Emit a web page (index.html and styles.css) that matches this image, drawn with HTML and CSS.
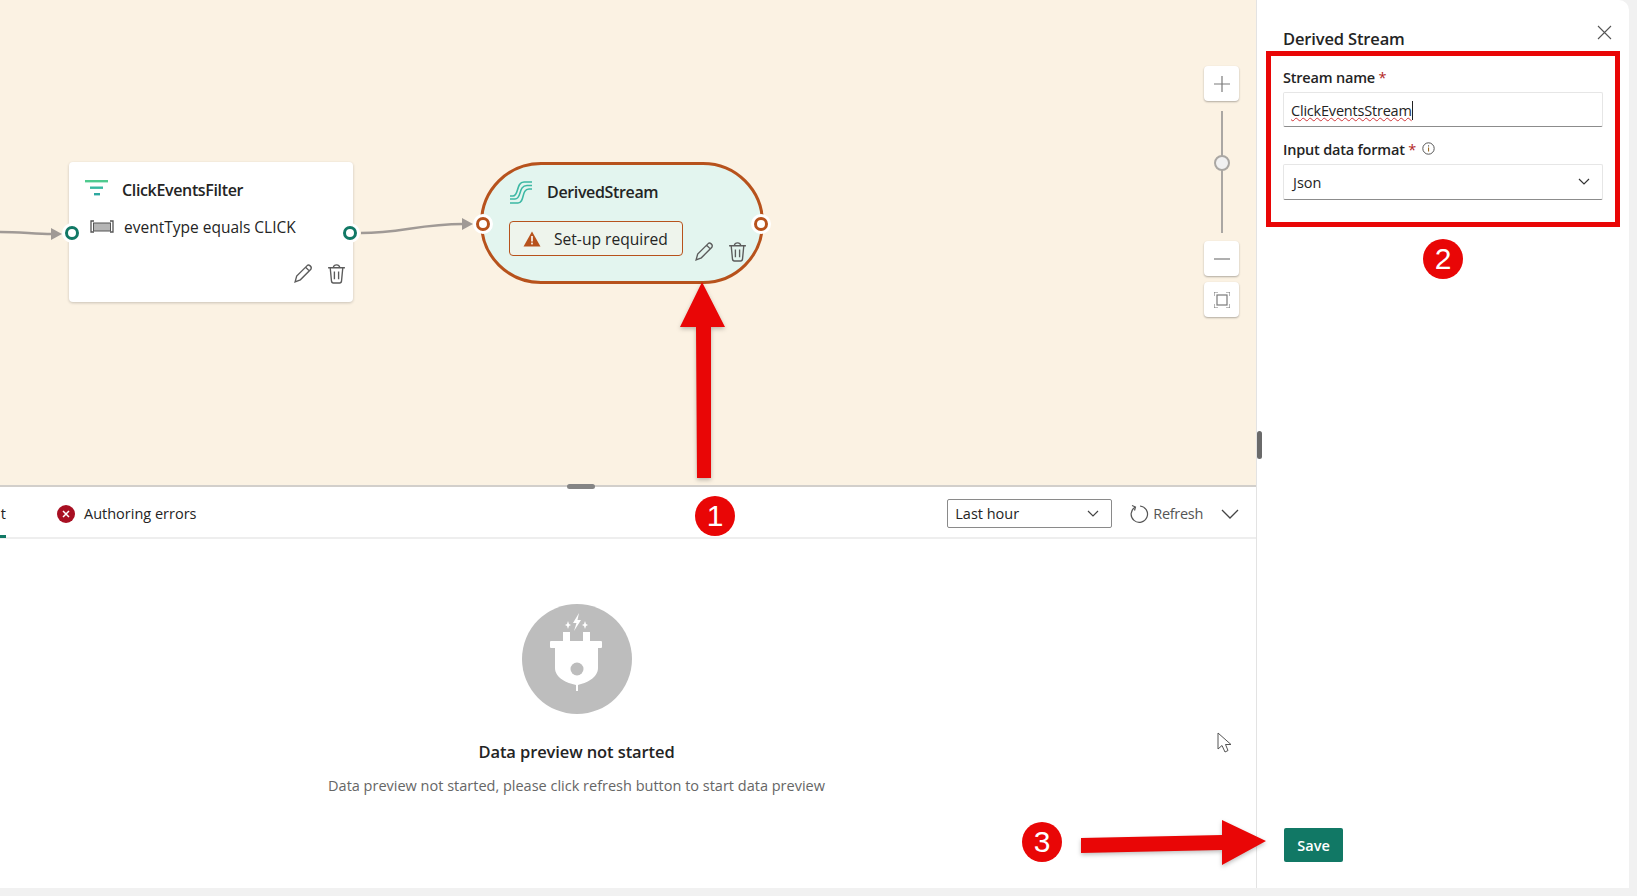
FILE: index.html
```html
<!DOCTYPE html>
<html lang="en">

<head>
    <meta charset="utf-8">
    <meta name="viewport" content="width=device-width, initial-scale=1.0">
    <title>Derived Stream</title>
    <link rel="stylesheet" href="styles.css">
</head>

<body>
    <div class="app">
        <main class="main">
            <section class="canvas">
                <svg class="edges" width="1256" height="485">
                    <path d="M0 232 C20 232 35 234 52 234" fill="none" stroke="#a09a96" stroke-width="2.5" />
                    <path d="M51 228 L62 234 L51 240 Z" fill="#a09a96" />
                    <path d="M361 233 C400 233 420 224 463 224" fill="none" stroke="#a09a96" stroke-width="2.5" />
                    <path d="M462 218 L473 224 L462 230 Z" fill="#a09a96" />
                </svg>

                <div class="node filter-node">
                    <div class="node-title">
                        <svg class="node-icon" width="24" height="20" viewBox="0 0 24 20">
                            <rect x="0" y="0" width="23" height="2.4" fill="#4fca8f" />
                            <rect x="5" y="6.5" width="13" height="2.4" fill="#38b8a0" />
                            <rect x="9" y="13" width="6" height="2.4" fill="#2ea8a0" />
                        </svg>
                        <span>ClickEventsFilter</span>
                    </div>
                    <div class="node-row">
                        <svg width="24" height="14" viewBox="0 0 24 14">
                            <path d="M4 1H1V12H4M20 1H23V12H20" fill="none" stroke="#555" stroke-width="1.3" />
                            <rect x="3.5" y="3" width="17" height="8" fill="#b5b5b5" stroke="#555" />
                        </svg>
                        <span>eventType equals CLICK</span>
                    </div>
                    <div class="node-actions">
                        <svg width="21" height="21" viewBox="0 0 20 20">
                            <path d="M2 18 L3.5 12.5 L13.5 2.5 C15 1 18.5 3.5 17 6 L7 16 Z M12 4 L15.5 7.5" fill="none" stroke="#5c5c5c" stroke-width="1.3" />
                        </svg>
                        <svg width="21" height="21" viewBox="0 0 20 20">
                            <path d="M2 4.5H18M7 4.5C7 .8 13 .8 13 4.5M4 4.5L5.2 17C5.3 18.2 6 19 7 19H13C14 19 14.7 18.2 14.8 17L16 4.5M8 8V15.5M12 8V15.5" fill="none" stroke="#5c5c5c" stroke-width="1.3" />
                        </svg>
                    </div>
                </div>

                <div class="node stream-node">
                    <div class="node-title">
                        <svg class="node-icon" width="24" height="24" viewBox="0 0 24 24">
                            <path d="M1 16H4C10 16 7 2 15 2H23" fill="none" stroke="#3cb8a4" stroke-width="1.6" />
                            <path d="M1 19H6C13 19 9 5.500 18 5.500H23" fill="none" stroke="#3cb8a4" stroke-width="1.6" />
                            <path d="M1 23H9C16 23 12 9 20 9H23" fill="none" stroke="#3cb8a4" stroke-width="1.6" />
                        </svg>
                        <span>DerivedStream</span>
                    </div>
                    <div class="stream-bottom">
                        <div class="badge">
                            <svg width="18" height="16" viewBox="0 0 18 16">
                                <path d="M9 .5 L17.5 15.5 H.5 Z" fill="#b7521c" />
                                <rect x="8.2" y="5" width="1.6" height="5.5" fill="#fff" />
                                <rect x="8.2" y="11.6" width="1.6" height="1.8" fill="#fff" />
                            </svg>
                            <span>Set-up required</span>
                        </div>
                        <div class="node-actions stream-actions">
                            <svg width="21" height="21" viewBox="0 0 20 20">
                                <path d="M2 18 L3.5 12.5 L13.5 2.5 C15 1 18.5 3.5 17 6 L7 16 Z M12 4 L15.5 7.5" fill="none" stroke="#5c5c5c" stroke-width="1.3" />
                            </svg>
                            <svg width="21" height="21" viewBox="0 0 20 20">
                                <path d="M2 4.5H18M7 4.5C7 .8 13 .8 13 4.5M4 4.5L5.2 17C5.3 18.2 6 19 7 19H13C14 19 14.7 18.2 14.8 17L16 4.5M8 8V15.5M12 8V15.5" fill="none" stroke="#5c5c5c" stroke-width="1.3" />
                            </svg>
                        </div>
                    </div>
                </div>

                <span class="port port-green port-a"></span>
                <span class="port port-green port-b"></span>
                <span class="port port-orange port-c"></span>
                <span class="port port-orange port-d"></span>

                <div class="zoom-tools">
                    <button class="zoom-btn">
                        <svg width="16" height="16" viewBox="0 0 16 16"><path d="M8 0V16M0 8H16" stroke="#7a7a7a" stroke-width="1.2" /></svg>
                    </button>
                    <div class="zoom-track"><span class="zoom-thumb"></span></div>
                    <button class="zoom-btn">
                        <svg width="16" height="16" viewBox="0 0 16 16"><path d="M0 8H16" stroke="#7a7a7a" stroke-width="1.2" /></svg>
                    </button>
                    <button class="zoom-btn">
                        <svg width="16" height="16" viewBox="0 0 16 16">
                            <path d="M0 4V0H4M12 0H16V4M16 12V16H12M4 16H0V12" fill="none" stroke="#7a7a7a" stroke-width="1.1" />
                            <rect x="3" y="3" width="10" height="10" fill="none" stroke="#7a7a7a" stroke-width="1.2" />
                        </svg>
                    </button>
                </div>
                <span class="sash"></span>
            </section>

            <section class="tabs">
                <div class="tab tab-active">t</div>
                <div class="tab tab-errors">
                    <svg width="18" height="18" viewBox="0 0 18 18">
                        <circle cx="9" cy="9" r="9" fill="#a80f22" />
                        <path d="M6 6L12 12M12 6L6 12" stroke="#fff" stroke-width="1.5" />
                    </svg>
                    <span>Authoring errors</span>
                </div>
                <div class="tabs-right">
                    <div class="range-select">
                        <span>Last hour</span>
                        <svg width="12" height="8" viewBox="0 0 12 8"><path d="M1 1L6 6L11 1" fill="none" stroke="#444" stroke-width="1.2" /></svg>
                    </div>
                    <div class="refresh">
                        <svg width="20" height="20" viewBox="0 0 20 20">
                            <path d="M6 3.2A8.2 8.2 0 1 0 11 2" fill="none" stroke="#555" stroke-width="1.2" />
                            <path d="M3 1.5L6.5 3L5.5 6.5" fill="none" stroke="#555" stroke-width="1.2" />
                        </svg>
                        <span>Refresh</span>
                    </div>
                    <svg class="collapse" width="18" height="10" viewBox="0 0 18 10"><path d="M1 1L9 9L17 1" fill="none" stroke="#444" stroke-width="1.3" /></svg>
                </div>
            </section>

            <section class="preview">
                <svg class="plug" width="110" height="110" viewBox="0 0 110 110">
                    <circle cx="55" cy="55" r="55" fill="#bdbdbd" />
                    <g fill="#fff">
                        <rect x="41" y="28" width="7" height="10" />
                        <rect x="61" y="28" width="7" height="10" />
                        <rect x="28" y="37" width="52" height="7" rx="1" />
                        <path d="M33 44H76V64C76 74 64 79 56 81V87H54V81C45 79 33 74 33 64Z" />
                        <path d="M57 9L51 19H54.5L52 27L59 16H55.5Z" />
                        <path d="M46 17L47 20L49 21L47 22L46 25L45 22L43 21L45 20Z" />
                        <path d="M63 17L64 20L66 21L64 22L63 25L62 22L60 21L62 20Z" />
                    </g>
                    <circle cx="55" cy="65" r="6.5" fill="#bdbdbd" />
                </svg>
                <h2 class="preview-title">Data preview not started</h2>
                <p class="preview-text">Data preview not started, please click refresh button to start data preview</p>
            </section>
        </main>

        <aside class="panel">
            <svg class="close" width="15" height="15" viewBox="0 0 15 15"><path d="M1 1L14 14M14 1L1 14" stroke="#555" stroke-width="1.1" /></svg>
            <h2 class="panel-title">Derived Stream</h2>
            <label class="field-label">Stream name <em>*</em></label>
            <div class="input"><span class="typed">ClickEventsStream</span></div>
            <label class="field-label second">Input data format <em>*</em>
                <svg class="info" width="13" height="13" viewBox="0 0 13 13">
                    <circle cx="6.5" cy="6.5" r="5.7" fill="none" stroke="#555" />
                    <rect x="6" y="5.5" width="1.1" height="4" fill="#9a6a20" />
                    <rect x="6" y="3.3" width="1.1" height="1.2" fill="#555" />
                </svg>
            </label>
            <div class="input dropdown">
                <span>Json</span>
                <svg width="12" height="8" viewBox="0 0 12 8"><path d="M1 1L6 6L11 1" fill="none" stroke="#333" stroke-width="1.2" /></svg>
            </div>
            <button class="save">Save</button>
        </aside>
    </div>

    <!-- annotations drawn over the screenshot -->
    <div class="mark-box"></div>
    <span class="step step-1">1</span>
    <span class="step step-2">2</span>
    <span class="step step-3">3</span>
    <svg class="marks" width="1637" height="896">
        <path d="M702 282 L725 327 H711 L711 478 H697 L696 327 H680 Z" fill="#e90606" />
        <path d="M1081 838 L1222 835 V820 L1266 841 L1222 865 V850 L1081 853 Z" fill="#e90606" />
    </svg>
    <svg class="cursor" width="16" height="22" viewBox="0 0 16 22">
        <path d="M1 1V17L5 13.5L8 20L11 18.5L8.5 12.5L14 12.5Z" fill="#fff" stroke="#555" stroke-width="1" />
    </svg>
</body>

</html>
```

FILE: styles.css
```css
body {
    margin: 0;
    background-color: #f1f1f1;
    font-family: "Open Sans", sans-serif;
    color: #242424;
    overflow: hidden;
}

.app {
    display: flex;
    width: 1629px;
    height: 888px;
}

.main {
    width: 1256px;
    display: flex;
    flex-direction: column;
    background-color: white;
}

/* canvas */

.canvas {
    position: relative;
    height: 485px;
    flex-shrink: 0;
    background-color: #fbf2e3;
    border-bottom: 2px solid #d2cfcb;
}

.edges {
    position: absolute;
    left: 0;
    top: 0;
}

.node {
    position: absolute;
    box-sizing: border-box;
}

.filter-node {
    left: 69px;
    top: 162px;
    width: 284px;
    height: 140px;
    padding: 18px 16px 0 16px;
    background-color: white;
    border-radius: 4px;
    box-shadow: 0 1px 3px rgba(0, 0, 0, 0.2);
}

.stream-node {
    left: 480px;
    top: 162px;
    width: 284px;
    height: 122px;
    padding: 15px 17px 0 26px;
    background-color: #e3f5ef;
    border: 3px solid #b7521c;
    border-radius: 61px;
}

.node-title {
    display: flex;
    align-items: center;
    gap: 13px;
    height: 20px;
    font-size: 16px;
    font-weight: 600;
    letter-spacing: -0.35px;
}

.stream-node .node-title {
    height: 24px;
    gap: 14px;
}

.node-row {
    display: flex;
    align-items: center;
    gap: 10px;
    margin-top: 17px;
    margin-left: 5px;
    height: 20px;
    font-size: 15.5px;
}

.node-actions {
    display: flex;
    justify-content: flex-end;
    gap: 12px;
    margin-top: 26px;
    margin-right: -10px;
}

.stream-bottom {
    display: flex;
    align-items: flex-end;
    margin-top: 17px;
}

.stream-actions {
    margin: 0 0 0 11px;
    position: relative;
    top: 6px;
}

.badge {
    display: flex;
    flex-shrink: 0;
    align-items: center;
    gap: 13px;
    box-sizing: border-box;
    width: 174px;
    height: 35px;
    padding-left: 13px;
    font-size: 15.6px;
    background-color: #eef4ec;
    border: 1px solid #b7521c;
    border-radius: 4px;
}

.port {
    position: absolute;
    box-sizing: border-box;
    width: 14px;
    height: 14px;
    background-color: white;
    border-radius: 50%;
    border: 3px solid;
    box-shadow: 0 0 0 3px white;
}

.port-green {
    border-color: #117865;
}

.port-orange {
    border-color: #b7521c;
}

.port-a {
    left: 65px;
    top: 226px;
}

.port-b {
    left: 343px;
    top: 226px;
}

.port-c {
    left: 476px;
    top: 217px;
}

.port-d {
    left: 754px;
    top: 217px;
}

.zoom-tools {
    position: absolute;
    left: 1204px;
    top: 66px;
    width: 35px;
    display: flex;
    flex-direction: column;
    align-items: center;
}

.zoom-btn {
    box-sizing: border-box;
    width: 35px;
    height: 35px;
    padding: 0;
    margin-bottom: 6px;
    display: flex;
    align-items: center;
    justify-content: center;
    background-color: white;
    border: none;
    border-radius: 4px;
    box-shadow: 0 1px 2px rgba(0, 0, 0, 0.3);
}

.zoom-track {
    position: relative;
    width: 2px;
    height: 122px;
    margin: 4px 0 8px 0;
    background-color: #aaa7a3;
}

.zoom-thumb {
    position: absolute;
    left: -7px;
    top: 44px;
    box-sizing: border-box;
    width: 16px;
    height: 16px;
    background-color: #f1f1f1;
    border: 2px solid #aaa7a3;
    border-radius: 50%;
}

.sash {
    position: absolute;
    left: 567px;
    bottom: -4px;
    width: 28px;
    height: 5px;
    background-color: #858585;
    border-radius: 3px;
}

/* tab bar */

.tabs {
    display: flex;
    align-items: center;
    box-sizing: border-box;
    height: 52px;
    padding-top: 3px;
    flex-shrink: 0;
    font-size: 14.5px;
    border-bottom: 2px solid #eeeeee;
}

.tab {
    display: flex;
    align-items: center;
    height: 100%;
}

.tab-active {
    position: relative;
    width: 6px;
    justify-content: flex-end;
}

.tab-active::after {
    content: "";
    position: absolute;
    left: 0;
    right: 0;
    bottom: -1px;
    height: 3px;
    background-color: #117865;
}

.tab-errors {
    margin-left: 51px;
    gap: 9px;
}

.tabs-right {
    display: flex;
    align-items: center;
    margin-left: auto;
    margin-right: 17px;
}

.range-select {
    display: flex;
    align-items: center;
    justify-content: space-between;
    box-sizing: border-box;
    width: 165px;
    height: 29px;
    padding: 0 12px 0 7px;
    margin-right: 17px;
    border: 1px solid #8a8a8a;
    border-radius: 2px;
}

.refresh {
    display: flex;
    align-items: center;
    gap: 4px;
    color: #555;
    letter-spacing: -0.3px;
    margin-right: 18px;
}

.preview {
    flex: 1;
    display: flex;
    flex-direction: column;
    align-items: center;
    width: 1153px;
    padding-top: 65px;
}

.preview-title {
    margin: 27px 0 0 0;
    font-size: 16.5px;
    font-weight: 600;
    line-height: 22px;
    letter-spacing: -0.1px;
}

.preview-text {
    margin: 13px 0 0 0;
    font-size: 14.5px;
    line-height: 20px;
    color: #666666;
}

/* side panel */

.panel {
    position: relative;
    flex: 1;
    display: flex;
    flex-direction: column;
    box-sizing: border-box;
    padding: 0 26px 26px 26px;
    background-color: white;
    border-left: 1px solid #e3e3e3;
    border-top-right-radius: 10px;
}

.panel::before {
    content: "";
    position: absolute;
    left: 0;
    top: 431px;
    width: 5px;
    height: 28px;
    background-color: #6a6a6a;
    border-radius: 3px;
}

.close {
    position: absolute;
    right: 17px;
    top: 25px;
}

.panel-title {
    margin: 28px 0 0 0;
    font-size: 16.5px;
    font-weight: 600;
    line-height: 22px;
    letter-spacing: -0.15px;
}

.field-label {
    display: block;
    margin-top: 18px;
    font-size: 14.5px;
    font-weight: 600;
    line-height: 20px;
    letter-spacing: -0.2px;
}

.field-label.second {
    margin-top: 13px;
}

.field-label em {
    font-style: normal;
    font-weight: 400;
    color: #b3261e;
}

.info {
    margin-left: 2px;
}

.input {
    display: flex;
    align-items: center;
    box-sizing: border-box;
    width: 320px;
    height: 35px;
    margin-top: 4px;
    padding: 2px 0 0 7px;
    font-size: 14.5px;
    border: 1px solid #e6e6e6;
    border-bottom: 1px solid #8c8c8c;
    border-radius: 2px;
}

.typed {
    letter-spacing: -0.2px;
    border-right: 1px solid #222;
    text-decoration: underline wavy #d13438 1px;
}

.dropdown {
    justify-content: space-between;
    height: 36px;
    padding: 0 12px 0 9px;
}

.save {
    width: 59px;
    height: 34px;
    margin-top: auto;
    margin-left: 1px;
    padding: 0;
    color: white;
    font-family: inherit;
    font-size: 14.5px;
    font-weight: 600;
    background-color: #117865;
    border: none;
    border-radius: 2px;
}

/* annotations */

.mark-box {
    position: absolute;
    left: 1266px;
    top: 51px;
    box-sizing: border-box;
    width: 354px;
    height: 176px;
    border: 5px solid #e90606;
}

.step {
    position: absolute;
    width: 40px;
    height: 40px;
    color: white;
    font-family: "Liberation Sans", sans-serif;
    font-size: 30px;
    line-height: 40px;
    text-align: center;
    background-color: #e90606;
    border-radius: 50%;
}

.step-1 {
    left: 695px;
    top: 496px;
}

.step-2 {
    left: 1423px;
    top: 239px;
}

.step-3 {
    left: 1022px;
    top: 822px;
}

.marks {
    position: absolute;
    left: 0;
    top: 0;
    filter: drop-shadow(0 2px 2px rgba(0, 0, 0, 0.25));
}

.cursor {
    position: absolute;
    left: 1217px;
    top: 732px;
}
```
